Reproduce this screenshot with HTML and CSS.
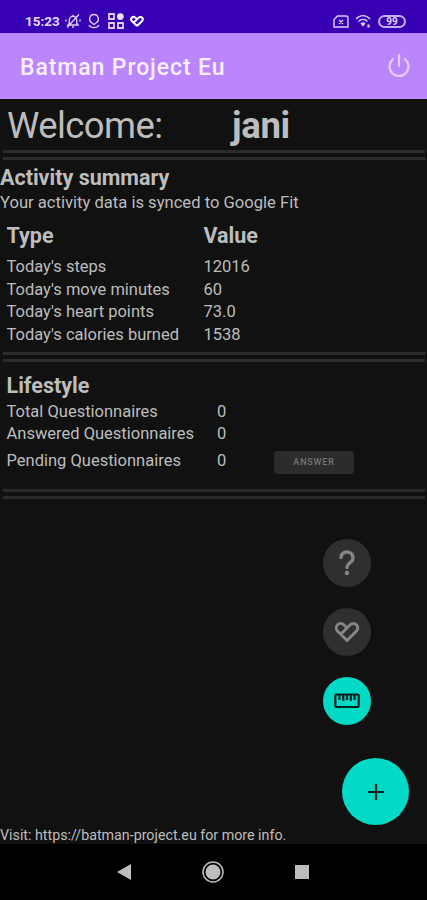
FILE: index.html
```html
<!DOCTYPE html>
<html lang="en">
  <head>
    <meta charset="utf-8">
    <meta name="viewport" content="width=device-width, initial-scale=1">
    <title>Batman Project Eu</title>
    <link rel="stylesheet" href="styles.css">
  </head>
  <body>
    <div class="status-bar">
      <span class="clock">15:23</span>
      <svg class="icon-bell" width="16" height="16" viewBox="0 0 16 16">
        <path d="M3 12h10l-1.300-1.800V7a3.700 3.700 0 0 0-7.400 0v3.200zM7 14h2M8 3.200V1.800M2 14.500L14 1.500M1 8.500v-2M15 8.500v-2"/>
      </svg>
      <svg class="icon-ring" width="14" height="16" viewBox="0 0 14 16">
        <path d="M5 10C1 7.500 2.500 1.500 7 1.500S13 7.500 9 10L7 11.500zM2 12c2 3.500 8 3.500 10 0"/>
      </svg>
      <svg class="icon-apps" width="16" height="16" viewBox="0 0 16 16">
        <path d="M1 1h5v5H1zM1 10h5v5H1zM10 10h5v5h-5z"/>
        <circle class="solid" cx="12.300" cy="3.600" r="3.400"/>
      </svg>
      <svg class="icon-fit" width="14" height="13" viewBox="0 0 26 22">
        <path d="M13 19.500L3.500 10a4.400 4.400 0 0 1 6.300-6.200l3.200 3.200M7 13L16.200 3.800a4.400 4.400 0 0 1 6.300 6.200L13 19.500"/>
      </svg>
      <svg class="icon-sim" width="16" height="13" viewBox="0 0 16 13">
        <path d="M4.500 1H13a2 2 0 0 1 2 2v9H1V4.500zM6 5l4 4M10 5L6 9"/>
      </svg>
      <svg class="icon-wifi" width="16" height="14" viewBox="0 0 16 14">
        <path d="M1 5c4-4.500 10-4.500 14 0M3.500 7.500c2.800-2.800 6.200-2.800 9 0M6 9.800c1.300-1.200 2.700-1.200 4 0"/>
        <path class="solid" d="M5.500 9.500h5L8 12.500zM12.500 10.500h2v3h-2z"/>
      </svg>
      <span class="battery">99</span>
    </div>

    <header class="app-bar">
      <h1>Batman Project Eu</h1>
      <svg class="icon-power" width="24" height="26" viewBox="0 0 24 26">
        <path d="M12 2v11M6.200 6A9.500 9.500 0 1 0 17.800 6"/>
      </svg>
    </header>

    <main>
      <div class="welcome">
        <span class="greeting">Welcome:</span>
        <strong>jani</strong>
      </div>
      <div class="divider"></div>

      <section class="activity">
        <h2>Activity summary</h2>
        <p>Your activity data is synced to Google Fit</p>
        <table>
          <thead>
            <tr><th>Type</th><th>Value</th></tr>
          </thead>
          <tbody>
            <tr><td>Today's steps</td><td>12016</td></tr>
            <tr><td>Today's move minutes</td><td>60</td></tr>
            <tr><td>Today's heart points</td><td>73.0</td></tr>
            <tr><td>Today's calories burned</td><td>1538</td></tr>
          </tbody>
        </table>
      </section>
      <div class="divider"></div>

      <section class="lifestyle">
        <h2>Lifestyle</h2>
        <div class="row"><span>Total Questionnaires</span><span>0</span></div>
        <div class="row"><span>Answered Questionnaires</span><span>0</span></div>
        <div class="row pending">
          <span>Pending Questionnaires</span><span>0</span>
          <button type="button">ANSWER</button>
        </div>
      </section>
      <div class="divider"></div>

      <p class="visit">Visit: https://batman-project.eu for more info.</p>

      <div class="actions">
        <div class="fab">
          <svg width="24" height="28" viewBox="0 0 24 28">
            <path class="round" d="M6 8.500a6 5.700 0 1 1 9.800 4.500C13 15.200 12 16 12 18.500"/>
            <circle cx="12" cy="24" r="2.200"/>
          </svg>
        </div>
        <div class="fab">
          <svg width="26" height="22" viewBox="0 0 26 22">
            <path class="round heart" d="M13 19.500L3.500 10a4.400 4.400 0 0 1 6.300-6.200l3.200 3.200M7 13L16.200 3.800a4.400 4.400 0 0 1 6.300 6.200L13 19.500"/>
          </svg>
        </div>
        <div class="fab teal">
          <svg width="26" height="16" viewBox="0 0 26 16">
            <rect x="1.300" y="1.500" width="23.400" height="12.500" rx="1"/>
            <path d="M5.500 2v5M9.300 2v6M13 2v5M16.800 2v6M20.500 2v5"/>
          </svg>
        </div>
        <div class="fab teal large">
          <svg width="18" height="18" viewBox="0 0 18 18">
            <path d="M9 1v16M1 9h16"/>
          </svg>
        </div>
      </div>
    </main>

    <nav class="nav-bar">
      <svg width="14" height="16" viewBox="0 0 14 16"><path d="M14 0v16L0 8z"/></svg>
      <svg width="22" height="22" viewBox="0 0 22 22">
        <circle class="ring" cx="11" cy="11" r="10"/>
        <circle cx="11" cy="11" r="7.500"/>
      </svg>
      <svg width="14" height="14" viewBox="0 0 14 14"><path d="M0 0h14v14H0z"/></svg>
    </nav>
  </body>
</html>
```
FILE: styles.css
```css
* {
  box-sizing: border-box;
}

body {
  margin: 0;
  height: 900px;
  display: flex;
  flex-direction: column;
  overflow: hidden;
  background-color: #111;
  color: #bdbdbd;
  font-family: Roboto, sans-serif;
  font-size: 16.5px;
}

h1,
h2,
p {
  margin: 0;
}

svg {
  display: block;
  flex: none;
}

.status-bar {
  height: 33px;
  padding: 9px 21px 0 25px;
  display: flex;
  align-items: center;
  background-color: #3700b3;
  color: #e3d8fa;
}

.status-bar svg {
  fill: none;
  stroke: #dccff8;
  stroke-width: 1.4;
}

.status-bar .solid {
  fill: #e9e0fc;
  stroke: none;
}

.clock {
  width: 40px;
  font-size: 13.5px;
  font-weight: bold;
}

.status-bar .icon-ring {
  margin-left: 6px;
}

.status-bar .icon-apps {
  margin-left: 7px;
  stroke-width: 1.8;
}

.status-bar .icon-fit {
  margin-left: 6px;
  stroke: #fff;
  stroke-width: 3.8;
}

.status-bar .icon-sim {
  margin-left: auto;
}

.status-bar .icon-wifi {
  margin-left: 6px;
}

.battery {
  width: 28px;
  height: 13px;
  margin-left: 7px;
  border: 2px solid #c5b0ef;
  border-radius: 7px;
  font-size: 10px;
  font-weight: bold;
  line-height: 9px;
  text-align: center;
}

.app-bar {
  height: 66px;
  padding: 2px 16px 0 20px;
  display: flex;
  align-items: center;
  justify-content: space-between;
  background-color: #bb86fc;
  color: #f9efff;
}

.app-bar h1 {
  padding-top: 1px;
  font-size: 23px;
  font-weight: 500;
  letter-spacing: 0.9px;
}

.icon-power {
  margin-top: -2px;
  fill: none;
  stroke: #e8c9fb;
  stroke-width: 2.2;
  stroke-linecap: round;
}

main {
  position: relative;
  flex: 1;
  display: flex;
  flex-direction: column;
}

.welcome {
  height: 51px;
  padding-left: 7px;
  display: grid;
  grid-template-columns: 225px 1fr;
  font-size: 36.5px;
  line-height: 53px;
}

.greeting {
  letter-spacing: -0.6px;
}

.welcome strong {
  letter-spacing: -0.3px;
}

.divider {
  height: 10px;
  margin: 0 2px 0 3px;
  border-top: 3px solid #2b2b2b;
  border-bottom: 3px solid #2b2b2b;
}

h2 {
  font-size: 21.5px;
  line-height: 26px;
}

.activity {
  height: 192px;
  padding-top: 5px;
}

.activity p {
  font-size: 16.6px;
  line-height: 24px;
}

table {
  margin: 1px 0 0 6.5px;
  border-collapse: collapse;
}

th,
td {
  height: 22.5px;
  padding: 0;
  text-align: left;
  line-height: 22px;
}

th {
  height: 40px;
  font-size: 21.5px;
}

th:first-child {
  width: 197px;
}

.lifestyle {
  height: 127px;
  padding: 11px 0 0 6.5px;
}

.lifestyle h2 {
  margin-bottom: 1px;
}

.row {
  height: 22.5px;
  display: grid;
  grid-template-columns: 210.5px 57px 80px;
  align-items: center;
}

.pending {
  height: 31px;
}

button {
  height: 23px;
  margin-top: 3px;
  padding: 0;
  border: none;
  border-radius: 4px;
  background-color: #2c2c2c;
  color: #747474;
  font-family: inherit;
  font-size: 9px;
  font-weight: 500;
  letter-spacing: 0.8px;
}

.visit {
  margin-top: auto;
  font-size: 14.25px;
  line-height: 18px;
}

.actions {
  position: absolute;
  right: 18px;
  bottom: 19px;
  display: flex;
  flex-direction: column;
  align-items: flex-end;
  gap: 21px;
}

.fab {
  width: 48px;
  height: 48px;
  margin-right: 38px;
  border-radius: 50%;
  display: flex;
  align-items: center;
  justify-content: center;
  background-color: #2f2f2f;
}

.fab svg {
  fill: none;
  stroke: #858585;
  stroke-width: 3.4;
}

.fab .round {
  stroke-linecap: round;
  stroke-linejoin: round;
}

.fab .heart {
  stroke-width: 3;
}

.fab circle {
  fill: #858585;
  stroke: none;
}

.fab.teal {
  background-color: #03dac5;
}

.fab.teal svg {
  stroke: #05231f;
  stroke-width: 2.2;
}

.fab.large {
  width: 67px;
  height: 67px;
  margin: 12px 0 0;
}

.nav-bar {
  height: 56px;
  padding: 0 118px 0 117px;
  display: flex;
  align-items: center;
  justify-content: space-between;
  background-color: #000;
}

.nav-bar svg {
  fill: #bdbdbd;
}

.nav-bar .ring {
  fill: none;
  stroke: #bdbdbd;
  stroke-width: 1.5;
}
```
